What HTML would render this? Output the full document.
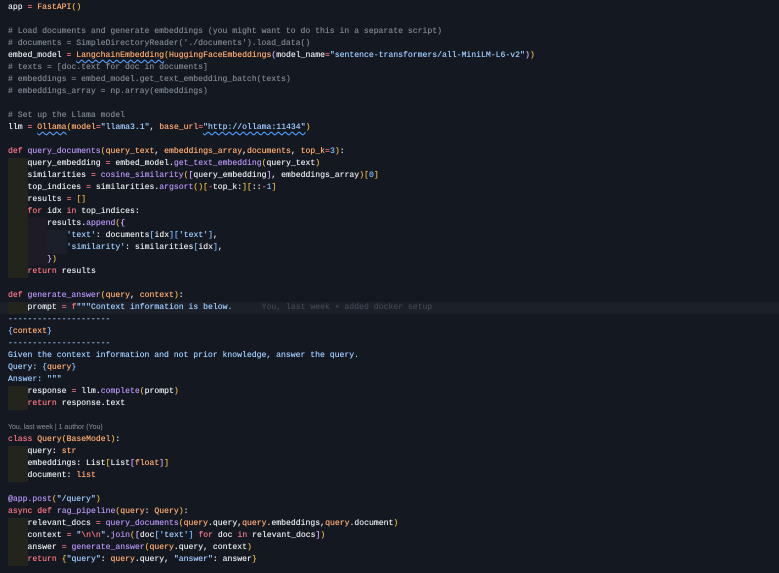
<!DOCTYPE html>
<html><head><meta charset="utf-8"><style>
body{margin:0;background:#141820;width:779px;height:573px;overflow:hidden}
.code{margin:0;padding:2px 0 0 8px;font-family:"Liberation Mono",monospace;font-size:8.15px;line-height:12px;color:#e6e9ed;text-shadow:0 0 0.4px currentColor}
.l{height:12px;white-space:pre}
.cur{background:#1c2029;margin-left:-8px;padding-left:8px}
.k{color:#f97583}.f{color:#b392f0}.s{color:#9ecbff}.p{color:#ffab70}.c{color:#7d8590}.n{color:#79b8ff}.y{color:#e3b341}.b{color:#79b8ff}.m{color:#d2a8ff}
.i{display:inline-block;width:19.56px;height:12px;vertical-align:top}
.i1{background:#23251d}.i2{background:#1f1b26}.i3{background:#1a1f2a}
.w{text-decoration:underline wavy #3794ff;text-decoration-thickness:1px;text-underline-offset:2px}
.lens{font-family:"Liberation Sans",sans-serif;font-size:7px;color:#8b949e;text-shadow:none}
.bl{color:#3f4650}
</style></head><body><div class="code">
<div class="l">app <span class="k">=</span> <span class="p">FastAPI</span><span class="y">()</span></div>
<div class="l"></div>
<div class="l c"># Load documents and generate embeddings (you might want to do this in a separate script)</div>
<div class="l c"># documents = SimpleDirectoryReader('./documents').load_data()</div>
<div class="l">embed_model <span class="k">=</span> <span class="p w">LangchainEmbedding</span><span class="y">(</span><span class="p">HuggingFaceEmbeddings</span><span class="m">(</span>model_name<span class="k">=</span><span class="s">"sentence-transformers/all-MiniLM-L6-v2"</span><span class="m">)</span><span class="y">)</span></div>
<div class="l c"># texts = [doc.text for doc in documents]</div>
<div class="l c"># embeddings = embed_model.get_text_embedding_batch(texts)</div>
<div class="l c"># embeddings_array = np.array(embeddings)</div>
<div class="l"></div>
<div class="l c"># Set up the Llama model</div>
<div class="l">llm <span class="k">=</span> <span class="p w">Ollama</span><span class="y">(</span><span class="p">model</span><span class="k">=</span><span class="s">"llama3.1"</span>, <span class="p">base_url</span><span class="k">=</span><span class="s w">"http://ollama:11434"</span><span class="y">)</span></div>
<div class="l"></div>
<div class="l"><span class="k">def</span> <span class="f">query_documents</span><span class="y">(</span><span class="p">query_text</span>, <span class="p">embeddings_array</span>,<span class="p">documents</span>, <span class="p">top_k</span><span class="k">=</span><span class="n">3</span><span class="y">)</span>:</div>
<div class="l"><span class="i i1"></span>query_embedding <span class="k">=</span> embed_model.<span class="f">get_text_embedding</span><span class="y">(</span>query_text<span class="y">)</span></div>
<div class="l"><span class="i i1"></span>similarities <span class="k">=</span> <span class="f">cosine_similarity</span><span class="y">(</span><span class="m">[</span>query_embedding<span class="m">]</span>, embeddings_array<span class="y">)</span><span class="y">[</span><span class="n">0</span><span class="y">]</span></div>
<div class="l"><span class="i i1"></span>top_indices <span class="k">=</span> similarities.<span class="f">argsort</span><span class="y">()[</span><span class="k">-</span>top_k:<span class="y">][</span>::<span class="k">-</span><span class="n">1</span><span class="y">]</span></div>
<div class="l"><span class="i i1"></span>results <span class="k">=</span> <span class="y">[]</span></div>
<div class="l"><span class="i i1"></span><span class="k">for</span> idx <span class="k">in</span> top_indices:</div>
<div class="l"><span class="i i1"></span><span class="i i2"></span>results.<span class="f">append</span><span class="y">(</span><span class="m">{</span></div>
<div class="l"><span class="i i1"></span><span class="i i2"></span><span class="i i3"></span><span class="s">'text'</span>: documents<span class="b">[</span>idx<span class="b">][</span><span class="s">'text'</span><span class="b">]</span>,</div>
<div class="l"><span class="i i1"></span><span class="i i2"></span><span class="i i3"></span><span class="s">'similarity'</span>: similarities<span class="b">[</span>idx<span class="b">]</span>,</div>
<div class="l"><span class="i i1"></span><span class="i i2"></span><span class="m">}</span><span class="y">)</span></div>
<div class="l"><span class="i i1"></span><span class="k">return</span> results</div>
<div class="l"></div>
<div class="l"><span class="k">def</span> <span class="f">generate_answer</span><span class="y">(</span><span class="p">query</span>, <span class="p">context</span><span class="y">)</span>:</div>
<div class="l cur"><span class="i i1"></span>prompt <span class="k">=</span> <span class="k">f</span><span class="s">"""Context information is below.</span>      <span class="bl">You, last week • added docker setup</span></div>
<div class="l s">---------------------</div>
<div class="l"><span class="b">{</span><span class="p">context</span><span class="b">}</span></div>
<div class="l s">---------------------</div>
<div class="l s">Given the context information and not prior knowledge, answer the query.</div>
<div class="l"><span class="s">Query: </span><span class="b">{</span><span class="p">query</span><span class="b">}</span></div>
<div class="l s">Answer: """</div>
<div class="l"><span class="i i1"></span>response <span class="k">=</span> llm.<span class="f">complete</span><span class="y">(</span>prompt<span class="y">)</span></div>
<div class="l"><span class="i i1"></span><span class="k">return</span> response.text</div>
<div class="l"></div>
<div class="l lens">You, last week | 1 author (You)</div>
<div class="l"><span class="k">class</span> <span class="p">Query</span><span class="y">(</span><span class="p">BaseModel</span><span class="y">)</span>:</div>
<div class="l"><span class="i i1"></span>query: <span class="p">str</span></div>
<div class="l"><span class="i i1"></span>embeddings: List<span class="y">[</span>List<span class="m">[</span><span class="p">float</span><span class="m">]</span><span class="y">]</span></div>
<div class="l"><span class="i i1"></span>document: <span class="p">list</span></div>
<div class="l"></div>
<div class="l"><span class="f">@app.post</span><span class="y">(</span><span class="s">"/query"</span><span class="y">)</span></div>
<div class="l"><span class="k">async</span> <span class="k">def</span> <span class="f">rag_pipeline</span><span class="y">(</span><span class="p">query</span>: <span class="p">Query</span><span class="y">)</span>:</div>
<div class="l"><span class="i i1"></span>relevant_docs <span class="k">=</span> <span class="f">query_documents</span><span class="y">(</span><span class="p">query</span>.query,<span class="p">query</span>.embeddings,<span class="p">query</span>.document<span class="y">)</span></div>
<div class="l"><span class="i i1"></span>context <span class="k">=</span> <span class="s">"</span><span class="k">\n\n</span><span class="s">"</span>.<span class="f">join</span><span class="y">(</span><span class="m">[</span>doc<span class="b">[</span><span class="s">'text'</span><span class="b">]</span> <span class="k">for</span> doc <span class="k">in</span> relevant_docs<span class="m">]</span><span class="y">)</span></div>
<div class="l"><span class="i i1"></span>answer <span class="k">=</span> <span class="f">generate_answer</span><span class="y">(</span><span class="p">query</span>.query, context<span class="y">)</span></div>
<div class="l"><span class="i i1"></span><span class="k">return</span> <span class="y">{</span><span class="s">"query"</span>: <span class="p">query</span>.query, <span class="s">"answer"</span>: answer<span class="y">}</span></div>
</div></body></html>
